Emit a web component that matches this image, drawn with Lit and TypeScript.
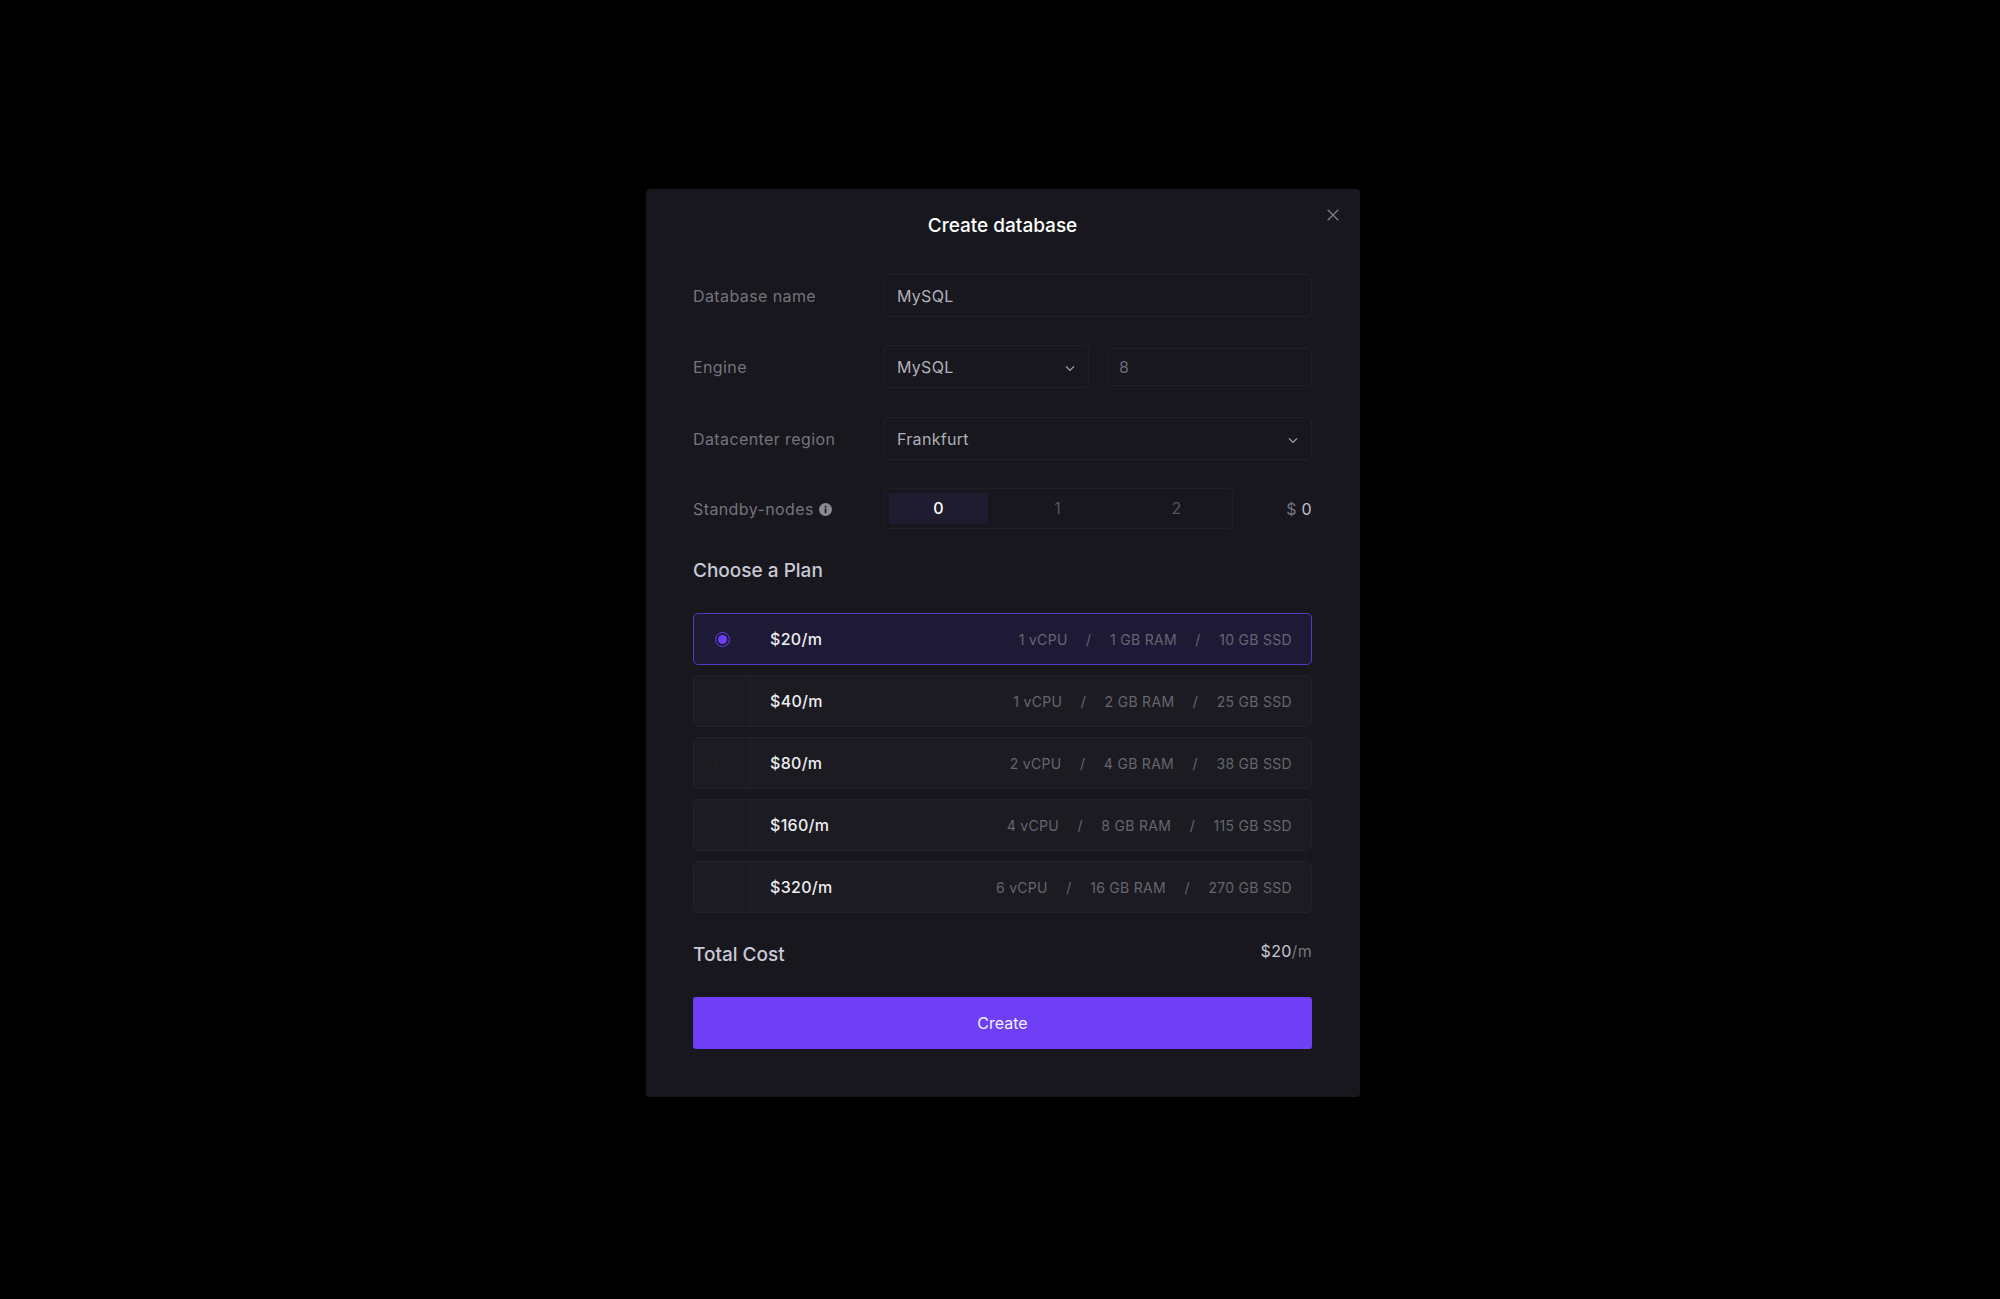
import { LitElement, css, html } from 'lit';
import { customElement } from 'lit/decorators.js';

interface Plan {
  price: string;
  cpu: string;
  ram: string;
  ssd: string;
}

const PLANS: Plan[] = [
  { price: '$20/m', cpu: '1 vCPU', ram: '1 GB RAM', ssd: '10 GB SSD' },
  { price: '$40/m', cpu: '1 vCPU', ram: '2 GB RAM', ssd: '25 GB SSD' },
  { price: '$80/m', cpu: '2 vCPU', ram: '4 GB RAM', ssd: '38 GB SSD' },
  { price: '$160/m', cpu: '4 vCPU', ram: '8 GB RAM', ssd: '115 GB SSD' },
  { price: '$320/m', cpu: '6 vCPU', ram: '16 GB RAM', ssd: '270 GB SSD' },
];

const chevron = html`<svg class="chevron" width="12" height="12" viewBox="0 0 12 12" fill="none">
  <path d="M2 4.4 6 8.4l4-4" stroke="currentColor" stroke-width="1.3" />
</svg>`;

@customElement('app-root')
export class AppRoot extends LitElement {
  static override styles = css`
    :host {
      display: block;
      min-height: 1299px;
      background: #000;
      font-family: Inter, 'Noto Sans', sans-serif;
      color: #a5a5b0;
    }

    .page {
      padding: 189px 0 0 646px;
    }

    .modal {
      position: relative;
      box-sizing: border-box;
      width: 714px;
      height: 908px;
      padding: 22px 48px 48px 47px;
      background: #17171d;
      border-radius: 4px;
    }

    .close {
      position: absolute;
      top: 20px;
      right: 21px;
      color: #7d7d86;
      display: flex;
    }

    h1 {
      margin: 0 0 33px;
      text-align: center;
      font-size: 19px;
      line-height: 30px;
      font-weight: 500;
      color: #fff;
    }

    .row {
      display: flex;
      align-items: center;
      height: 43px;
      margin-bottom: 28px;
    }

    .row.tall-gap {
      margin-bottom: 29px;
    }

    .row.standby {
      height: 41px;
      margin-bottom: 0;
    }

    .label {
      width: 191px;
      flex: none;
      font-size: 16px;
      letter-spacing: 0.4px;
      color: #74747e;
      display: flex;
      align-items: center;
      gap: 5px;
    }

    .label svg {
      margin-top: 2px;
    }

    .field {
      box-sizing: border-box;
      height: 43px;
      display: flex;
      align-items: center;
      justify-content: space-between;
      padding: 0 12px;
      border: 1px solid #202026;
      border-radius: 4px;
      font-size: 16px;
      letter-spacing: 0.3px;
      color: #b0b0ba;
    }

    .grow {
      flex: 1;
    }

    .engine {
      width: 205px;
      margin-right: 19px;
    }

    .version {
      flex: 1;
      height: 38px;
      padding: 0 10px;
      color: #6a6a74;
    }

    .chevron {
      color: #a5a5ae;
      flex: none;
      margin-top: 2px;
    }

    .nodes {
      box-sizing: border-box;
      display: grid;
      grid-template-columns: repeat(3, 99px);
      gap: 20px;
      width: 349px;
      height: 41px;
      padding: 4px;
      border: 1px solid #202026;
      border-radius: 4px;
      font-size: 16px;
      color: #55555f;
      text-align: center;
      line-height: 31px;
    }

    .nodes .active {
      background: #1f1c30;
      color: #fff;
      font-weight: 500;
      border-radius: 2px;
    }

    .cost {
      flex: 1;
      text-align: right;
      font-size: 16px;
      letter-spacing: 0.3px;
      color: #74747e;
    }

    .cost b {
      font-weight: 400;
      color: #c0c0c8;
    }

    h2 {
      margin: 0;
      font-size: 19px;
      line-height: 24px;
      font-weight: 500;
      color: #c9c9d6;
    }

    .plans-title {
      margin: 30px 0 30px;
    }

    .plans {
      display: flex;
      flex-direction: column;
      gap: 10px;
    }

    .plan {
      box-sizing: border-box;
      display: flex;
      align-items: center;
      height: 52px;
      border: 1px solid #222228;
      border-radius: 5px;
      background: #1b1b21;
    }

    .plan.selected {
      border-color: #5a39c0;
      background: #1e1934;
    }

    .radio-cell {
      box-sizing: border-box;
      width: 57px;
      height: 100%;
      flex: none;
      display: flex;
      align-items: center;
      justify-content: center;
      border-right: 1px solid #222228;
    }

    .selected .radio-cell {
      border-right-color: #211b38;
    }

    .radio {
      box-sizing: border-box;
      width: 15px;
      height: 15px;
      border: 1px solid #202026;
      border-radius: 50%;
      display: flex;
      align-items: center;
      justify-content: center;
    }

    .selected .radio {
      border-color: #6a40ea;
    }

    .selected .radio::after {
      content: '';
      width: 9px;
      height: 9px;
      border-radius: 50%;
      background: #6f3ff5;
    }

    .price {
      padding-left: 19px;
      font-size: 16px;
      letter-spacing: 0.3px;
      font-weight: 500;
      color: #eeeef2;
    }

    .specs {
      margin-left: auto;
      padding-right: 19px;
      display: flex;
      gap: 18.5px;
      font-size: 14px;
      letter-spacing: 0.3px;
      color: #666670;
    }

    .total {
      display: flex;
      justify-content: space-between;
      margin: 29px 0 0;
      height: 55px;
    }

    .total h2 {
      margin-top: 1px;
    }

    .total-value {
      font-size: 16px;
      letter-spacing: 0.3px;
      line-height: 24px;
      color: #c9c9d6;
      margin-top: -3px;
    }

    .total-value span {
      color: #74747e;
    }

    button {
      display: block;
      width: 100%;
      height: 52px;
      border: 0;
      border-radius: 3px;
      background: #6f3ff5;
      color: #f2eeff;
      font: 400 16px Inter, 'Noto Sans', sans-serif;
    }
  `;

  override render() {
    return html`
      <div class="page">
        <div class="modal">
          <span class="close">
            <svg width="12" height="12" viewBox="0 0 12 12" fill="none">
              <path d="M.7.7l10.6 10.6M11.3.7.7 11.3" stroke="currentColor" stroke-width="1.3" />
            </svg>
          </span>
          <h1>Create database</h1>
          <div class="row">
            <div class="label">Database name</div>
            <div class="field grow">MySQL</div>
          </div>
          <div class="row tall-gap">
            <div class="label">Engine</div>
            <div class="field engine">MySQL ${chevron}</div>
            <div class="field version">8</div>
          </div>
          <div class="row">
            <div class="label">Datacenter region</div>
            <div class="field grow">Frankfurt ${chevron}</div>
          </div>
          <div class="row standby">
            <div class="label">
              Standby-nodes
              <svg width="13" height="13" viewBox="0 0 13 13">
                <circle cx="6.5" cy="6.5" r="6.5" fill="#8a8a92" />
                <rect x="5.7" y="5.5" width="1.7" height="4.6" fill="#17171d" />
                <rect x="5.7" y="2.8" width="1.7" height="1.7" fill="#17171d" />
              </svg>
            </div>
            <div class="nodes">
              <span class="active">0</span>
              <span>1</span>
              <span>2</span>
            </div>
            <div class="cost">$ <b>0</b></div>
          </div>
          <h2 class="plans-title">Choose a Plan</h2>
          <div class="plans">
            ${PLANS.map(
              (plan, i) => html`
                <div class="plan ${i === 0 ? 'selected' : ''}">
                  <div class="radio-cell"><span class="radio"></span></div>
                  <div class="price">${plan.price}</div>
                  <div class="specs">
                    <span>${plan.cpu}</span><span>/</span><span>${plan.ram}</span><span>/</span><span>${plan.ssd}</span>
                  </div>
                </div>
              `,
            )}
          </div>
          <div class="total">
            <h2>Total Cost</h2>
            <div class="total-value">$20<span>/m</span></div>
          </div>
          <button>Create</button>
        </div>
      </div>
    `;
  }
}
